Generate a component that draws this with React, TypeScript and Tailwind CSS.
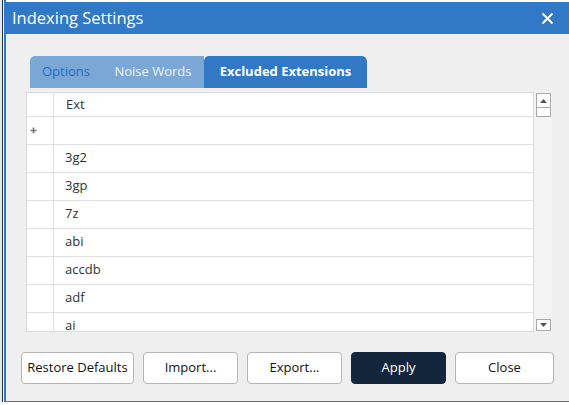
import React from "react";

const rows = ["3g2", "3gp", "7z", "abi", "accdb", "adf", "ai"];

function Btn({ label, w, dark }: { label: string; w: string; dark?: boolean }) {
  return (
    <div
      className={
        "h-[32px] flex items-center justify-center rounded-[4px] text-[13px] " +
        w +
        (dark
          ? " bg-[#13253b] text-white border border-[#13253b]"
          : " bg-white text-[#111] border border-[#b4b4b4]")
      }
    >
      {label}
    </div>
  );
}

export default function App() {
  return (
    <div
      className="w-[569px] h-[405px] overflow-hidden bg-white flex flex-col"
      style={{ fontFamily: '"Open Sans", "Noto Sans", sans-serif' }}
    >
      <div className="flex h-[402px]">
        <div className="w-[2px] bg-[#e8e8e8]" />
        <div className="w-[1px] bg-[#1c3258]" />
        <div className="w-[1px] bg-white" />
        <div className="flex-1 flex flex-col border-l-2 border-b border-[#2f78c8] bg-[#efefef]">
          <div className="h-[2px] bg-white" />
          <div className="h-[32px] bg-[#3178c6] flex items-center justify-between pl-[6px] pr-[15px]">
            <span className="text-white text-[16.5px] leading-none">Indexing Settings</span>
            <svg width="13" height="13" viewBox="0 0 13 13">
              <path d="M1.5 1.5 L11.5 11.5 M11.5 1.5 L1.5 11.5" stroke="white" strokeWidth="2" />
            </svg>
          </div>
          <div className="pl-[22px] pt-[22px] flex">
            <div className="flex h-[32px] rounded-t-[5px] overflow-hidden ml-[2px]">
              <div className="w-[72px] bg-[#7ba7d6] flex items-center justify-center text-[13px] text-[#1d6cc3]">
                Options
              </div>
              <div className="w-[102px] bg-[#7ba7d6] flex items-center justify-center text-[13px] text-[#eef4fb]">
                Noise Words
              </div>
              <div className="w-[163px] bg-[#3178c6] flex items-center justify-center text-[13px] font-bold text-white rounded-t-[5px]">
                Excluded Extensions
              </div>
            </div>
          </div>
          <div className="ml-[20px] mt-[4px] flex w-[526px] h-[240px] overflow-hidden">
            <div className="w-[508px] bg-white border border-[#dcdcdc] flex flex-col text-[13px] text-[#333]">
              <div className="h-[24px] flex border-b border-[#e0e0e0] shrink-0">
                <div className="w-[27px] border-r border-[#e0e0e0]" />
                <div className="pl-[12px] flex items-center">Ext</div>
              </div>
              <div className="h-[28px] flex border-b border-[#e0e0e0] shrink-0">
                <div className="w-[27px] border-r border-[#e0e0e0] flex items-center pl-[3px]">
                  <svg width="7" height="7" viewBox="0 0 7 7">
                    <path d="M3.5 0.5 V6.5 M0.5 3.5 H6.5" stroke="#777" strokeWidth="1.6" />
                  </svg>
                </div>
                <div />
              </div>
              {rows.map((r) => (
                <div key={r} className="h-[28px] flex border-b border-[#e0e0e0] shrink-0">
                  <div className="w-[27px] border-r border-[#e0e0e0]" />
                  <span className="ml-[11px] self-center leading-[12px] mb-[4px]">{r}</span>
                </div>
              ))}
            </div>
            <div className="w-[18px] bg-[#f3f3f3] flex flex-col items-start pl-[2px] pt-[1px] pb-[1px] justify-between">
              <div className="flex flex-col">
                <div className="w-[15px] h-[15px] border border-[#a8a8a8] bg-white flex items-center justify-center">
                  <svg width="7" height="4" viewBox="0 0 7 4">
                    <path d="M0 4 L3.5 0 L7 4 Z" fill="#555" />
                  </svg>
                </div>
                <div className="w-[15px] h-[9px] border border-[#a8a8a8] border-t-0 bg-white" />
              </div>
              <div className="w-[15px] h-[12px] border border-[#a8a8a8] bg-white flex items-center justify-center">
                <svg width="7" height="4" viewBox="0 0 7 4">
                  <path d="M0 0 L3.5 4 L7 0 Z" fill="#555" />
                </svg>
              </div>
            </div>
          </div>
          <div className="flex gap-[9px] pl-[15px] mt-[20px]">
            <Btn label="Restore Defaults" w="w-[113px]" />
            <Btn label="Import..." w="w-[95px]" />
            <Btn label="Export..." w="w-[95px]" />
            <Btn label="Apply" w="w-[95px]" dark />
            <Btn label="Close" w="w-[99px]" />
          </div>
        </div>
      </div>
      <div className="h-[3px] bg-white" />
    </div>
  );
}
